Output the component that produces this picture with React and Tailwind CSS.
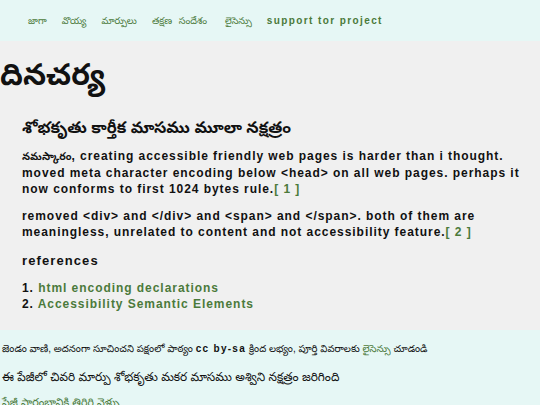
import React from "react";

const sans = { fontFamily: '"Liberation Sans", Arial, "Noto Sans Telugu", sans-serif' };

export default function App() {
  return (
    <div className="min-h-[405px] bg-[#f0f0f0] text-[#111]" style={sans}>
      <nav className="h-[41px] bg-[#e6f7f5] flex items-center pl-[28px] gap-[15px] text-[#4b7a3b]">
        <a className="text-[9.5px] leading-none">జాగా</a>
        <a className="text-[9.5px] leading-none">వొయ్య</a>
        <a className="text-[9.5px] leading-none">మార్పులు</a>
        <a className="text-[9.5px] leading-none [word-spacing:4px]">తక్షణ సందేశం</a>
        <a className="text-[9.5px] leading-none ml-[3px]">లైసెన్సు</a>
        <a className="font-bold tracking-[1.4px] text-[10px] leading-none">support tor project</a>
      </nav>
      <main className="pb-[18px]">
        <h1 className="text-[30px] font-bold leading-none pt-[19px] pb-[28px]">దినచర్య</h1>
        <div className="pl-[22px] pr-[12px]">
          <h2 className="text-[16px] font-bold leading-[20px] mb-[10px]">శోభకృతు కార్తీక మాసము మూలా నక్షత్రం</h2>
          <p className="text-[12px] font-bold tracking-[0.95px] leading-[16.5px] mb-[10px]">
            <span className="text-[10.5px] tracking-normal">నమస్కారం</span>, creating accessible friendly web pages is harder than i thought. moved meta character encoding below &lt;head&gt; on all web pages. perhaps it now conforms to first 1024 bytes rule.<a className="text-[#4b7a3b]">[ 1 ]</a>
          </p>
          <p className="text-[12px] font-bold tracking-[0.95px] leading-[16.5px] mb-[11px]">
            removed &lt;div&gt; and &lt;/div&gt; and &lt;span&gt; and &lt;/span&gt;. both of them are meaningless, unrelated to content and not accessibility feature.<a className="text-[#4b7a3b]">[ 2 ]</a>
          </p>
          <h3 className="text-[13px] font-bold tracking-[1.1px] leading-[18px] mb-[10px]">references</h3>
          <ol className="text-[12px] font-bold tracking-[0.95px] leading-[16px]">
            <li>1. <a className="text-[#4b7a3b]">html encoding declarations</a></li>
            <li>2. <a className="text-[#4b7a3b]">Accessibility Semantic Elements</a></li>
          </ol>
        </div>
      </main>
      <footer className="bg-[#e6f7f5] pt-[12px] pl-[2px] h-[80px] overflow-hidden">
        <p className="text-[10px] leading-[14px] mb-[13px]">
          జెండం వాణి, అదనంగా సూచించని పక్షంలో పాఠ్యం <span className="font-bold tracking-[1.3px]">cc by-sa</span> క్రింద లభ్యం, పూర్తి వివరాలకు <a className="text-[#4b7a3b]">లైసెన్సు</a> చూడండి
        </p>
        <p className="text-[12px] leading-[16px] mb-[4px]">ఈ పేజీలో చివరి మార్పు శోభకృతు మకర మాసము అశ్విని నక్షత్రం జరిగింది</p>
        <a className="text-[11px] text-[#4b7a3b] leading-[14px]">పేజీ ప్రారంభానికి తిరిగి వెళ్ళు</a>
      </footer>
    </div>
  );
}
